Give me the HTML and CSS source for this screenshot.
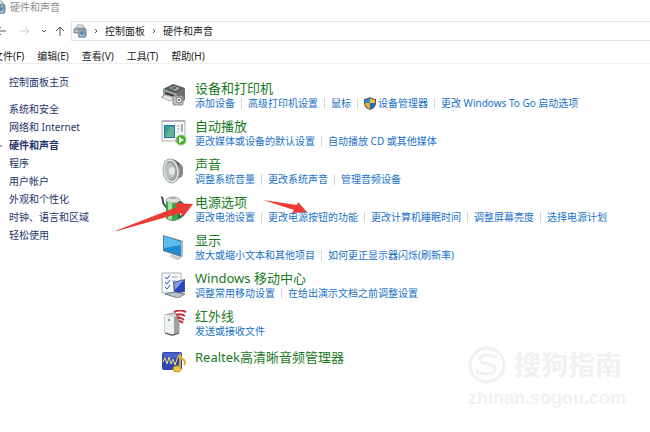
FILE: index.html
```html
<!DOCTYPE html>
<html lang="zh-CN">
<head>
<meta charset="utf-8">
<title>硬件和声音</title>
<link rel="stylesheet" href="styles.css">
</head>
<body>
<svg class="defs" aria-hidden="true">
  <symbol id="device" viewBox="0 0 14 14">
    <path d="M4 4V1h6l1 3" fill="#eef3f6" stroke="#9aa6ae"/>
    <path d="M1 5l2-1h9l1 2v6l-2 1H6V9H1z" fill="#9aa8b2" stroke="#7f8c96"/>
    <path d="M2 7h4" stroke="#dce4e9"/>
    <rect x="6" y="6" width="6" height="7" fill="#b7c9d6" stroke="#6d8292"/>
    <circle cx="9" cy="9" r="2" fill="#4f88b2"/>
  </symbol>
</svg>
<header>
  <div class="titlebar"><svg class="small-icon"><use href="#device"/></svg><span>硬件和声音</span></div>
  <div class="navbar">
    <button class="nav back" aria-label="后退"><svg viewBox="0 0 10 10"><path d="M10 5H1M5 1L1 5l4 4"/></svg></button>
    <button class="nav forward" aria-label="前进" disabled><svg viewBox="0 0 10 10"><path d="M0 5h9M5 1l4 4-4 4"/></svg></button>
    <button class="nav recent" aria-label="最近浏览的位置"><svg viewBox="0 0 10 10"><path d="M3 4l2 2 2-2"/></svg></button>
    <button class="nav up" aria-label="向上"><svg viewBox="0 0 10 10"><path d="M5 10V1M1 5l4-4 4 4"/></svg></button>
    <nav class="address" aria-label="地址">
      <svg class="small-icon"><use href="#device"/></svg>
      <svg class="chevron" viewBox="0 0 6 8"><path d="M2 2l2 2-2 2"/></svg>
      <a href="#">控制面板</a>
      <svg class="chevron" viewBox="0 0 6 8"><path d="M2 2l2 2-2 2"/></svg>
      <a href="#">硬件和声音</a>
    </nav>
  </div>
  <div class="menubar">
    <button>文件(F)</button><button>编辑(E)</button><button>查看(V)</button><button>工具(T)</button><button>帮助(H)</button>
  </div>
</header>
<div class="content">
  <nav class="sidebar" aria-label="类别">
    <a class="home" href="#">控制面板主页</a>
    <a href="#">系统和安全</a>
    <a href="#">网络和 Internet</a>
    <a class="current" href="#" aria-current="page">硬件和声音</a>
    <a href="#">程序</a>
    <a href="#">用户帐户</a>
    <a href="#">外观和个性化</a>
    <a href="#">时钟、语言和区域</a>
    <a href="#">轻松使用</a>
  </nav>
  <main>
    <section class="category">
      <svg class="icon" viewBox="0 0 26 26">
        <path d="M2 7l10-5 12 4-8 6z" fill="#555b5e"/><path d="M8 6l5-2 6 2-4 3z" fill="#a1b4b9"/><path d="M10 6l4-1 2 1-3 1z" fill="#39464b"/>
        <path d="M2 7l14 5v7L2 14z" fill="#999"/><path d="M16 12l8-6v12l-8 4z" fill="#6e6e6e"/>
        <path d="M4 10l9 3v2l-9-3z" fill="#343434"/><path d="M0 15l5-2 9 3-5 3z" fill="#e8e8e8" stroke="#aaa"/>
        <rect x="12" y="14" width="10" height="9" rx="1" fill="#c4c4c4" stroke="#888"/><circle cx="18" cy="18" r="3" fill="#eee" stroke="#777"/><circle cx="18" cy="18" r="1" fill="#546"/>
      </svg>
      <div>
        <h2><a href="#">设备和打印机</a></h2>
        <ul><li><a href="#">添加设备</a></li><li><a href="#">高级打印机设置</a></li><li><a href="#">鼠标</a></li><li><svg class="shield" viewBox="0 0 12 13"><path d="M6 0q3 2 6 2v4q0 5-6 7Q0 11 0 6V2q3 0 6-2z" fill="#46535d"/><path d="M6 1v5H1V3q3 0 5-2z" fill="#2c8bd5"/><path d="M6 1q2 2 5 2v3H6z" fill="#f5c331"/><path d="M1 6h5v6Q1 10 1 6z" fill="#f2ae22"/><path d="M6 6h5q0 4-5 6z" fill="#1970bd"/></svg><a href="#">设备管理器</a></li><li><a href="#">更改 Windows To Go 启动选项</a></li></ul>
      </div>
    </section>
    <section class="category">
      <svg class="icon" viewBox="0 0 26 26">
        <rect x="1" y="1" width="23" height="20" fill="#fafafa" stroke="#a9adb0"/><path d="M1 1h23" stroke="#8f969b"/>
        <rect x="3" y="5" width="11" height="13" fill="#2576a8"/><path d="M4 6h9v11H4z" fill="#3f9c96"/><path d="M4 17l5-10h4v10z" fill="#62b58b"/>
        <path d="M16 6h3M16 9h3M16 12h2" stroke="#9fb0bd"/><path d="M21 4v8" stroke="#4b6478"/>
        <circle cx="20" cy="20" r="5" fill="#45ad31" stroke="#8ccf7e"/><path d="M18 17l5 3-5 3z" fill="#fff"/>
      </svg>
      <div>
        <h2><a href="#">自动播放</a></h2>
        <ul><li><a href="#">更改媒体或设备的默认设置</a></li><li><a href="#">自动播放 CD 或其他媒体</a></li></ul>
      </div>
    </section>
    <section class="category">
      <svg class="icon" viewBox="0 0 26 26">
        <path d="M10 1q4 0 8 4 4 2 4 8t-4 7q-3 4-6 4z" fill="#4f5353"/>
        <path d="M18 5q4 2 4 8t-4 7z" fill="#85898a"/>
        <ellipse cx="10" cy="13" rx="8" ry="12" transform="rotate(-8 10 13)" fill="#e3e5e5" stroke="#a5a9a9"/>
        <ellipse cx="10" cy="13" rx="6" ry="10" transform="rotate(-8 10 13)" fill="#999e9f"/>
        <ellipse cx="9" cy="13" rx="5" ry="8" transform="rotate(-8 9 13)" fill="#bcc2c2"/>
        <ellipse cx="11" cy="13" rx="3" ry="4" fill="#e5e8e8"/>
      </svg>
      <div>
        <h2><a href="#">声音</a></h2>
        <ul><li><a href="#">调整系统音量</a></li><li><a href="#">更改系统声音</a></li><li><a href="#">管理音频设备</a></li></ul>
      </div>
    </section>
    <section class="category power">
      <svg class="icon" viewBox="0 0 26 26">
        <path d="M0 1q2 0 2 5 1 4 6 7" fill="none" stroke="#454b50" stroke-width="2"/>
        <path d="M18 5q6 3 5 10-1 5-5 7" fill="none" stroke="#4c5156" stroke-width="2"/>
        <path d="M5 4v18q7 6 14 0V4z" fill="#35a64a"/><path d="M7 4v19l4 1V4z" fill="#a2e3a7"/><path d="M17 4h2v18l-2 1z" fill="#177831"/>
        <ellipse cx="12" cy="4" rx="7" ry="3" fill="#dbe2da" stroke="#a3afa3"/><ellipse cx="12" cy="2" rx="3" ry="1" fill="#9ea69f"/>
        <path d="M5 22q7 4 14 0v1q-7 4-14 0z" fill="#7e9a7c"/>
      </svg>
      <div>
        <h2><a href="#">电源选项</a></h2>
        <ul><li><a href="#">更改电池设置</a></li><li><a href="#">更改电源按钮的功能</a></li><li><a href="#">更改计算机睡眠时间</a></li><li><a href="#">调整屏幕亮度</a></li><li><a href="#">选择电源计划</a></li></ul>
      </div>
      <svg class="arrows" viewBox="0 0 200 40" aria-hidden="true">
        <path d="M2 37L64 13 62 9 80 10 70 23 68 19 4 37z"/>
        <path d="M150 6L184 11 185 8 194 18 179 19 181 16z"/>
      </svg>
    </section>
    <section class="category">
      <svg class="icon" viewBox="0 0 26 26">
        <path d="M2 1l20 6v15l-2 1L2 17z" fill="#667b8b"/><path d="M3 2l17 6v14L3 16z" fill="#218bd2"/><path d="M3 2l17 6v3L3 14z" fill="#5cbcec"/><path d="M20 8l2-1v15l-2 1z" fill="#a6b9c7"/>
        <path d="M9 19l5 2v1l6 1v2l-4 1-8-4 3-1z" fill="#c4cbd0"/>
      </svg>
      <div>
        <h2><a href="#">显示</a></h2>
        <ul><li><a href="#">放大或缩小文本和其他项目</a></li><li><a href="#">如何更正显示器闪烁(刷新率)</a></li></ul>
      </div>
    </section>
    <section class="category">
      <svg class="icon" viewBox="0 0 26 26">
        <path d="M1 1h19v20H1z" fill="#f7f9fb" stroke="#a5adb3"/>
        <path d="M4 5l2 2 3-4M4 10l2 2 3-4M4 15l2 2 3-4" fill="none" stroke="#2860b0"/><path d="M11 5h6M11 9h4" stroke="#8da5c5"/>
        <path d="M12 10l12-3v13l-11 2z" fill="#4b5870"/><path d="M13 11l10-3v11l-9 2z" fill="#2746bd"/><path d="M13 11l10-3-9 10z" fill="#7f9ce6"/>
        <path d="M4 22l9-2 11 2-7 4z" fill="#bdc4cb" stroke="#727b85"/>
      </svg>
      <div>
        <h2><a href="#">Windows 移动中心</a></h2>
        <ul><li><a href="#">调整常用移动设置</a></li><li><a href="#">在给出演示文档之前调整设置</a></li></ul>
      </div>
    </section>
    <section class="category">
      <svg class="icon" viewBox="0 0 26 26">
        <path d="M4 5l8-2 6 2v18l-7 3-7-3z" fill="#d5d7d7" stroke="#9a9d9d"/><path d="M4 5l9 2v18l-9-2z" fill="#f0f1f1"/><path d="M13 7l5-2v18l-5 2z" fill="#9ea2a2"/>
        <circle cx="8" cy="10" r="1" fill="#4b9a58"/><path d="M4 23l8 2 6-2" fill="none" stroke="#4f5252"/>
        <path d="M13 2q6-3 12 0M15 5q5-2 9 1M16 8q4-1 7 2M18 11q2 0 4 2" fill="none" stroke="#c53138" stroke-width="2"/>
      </svg>
      <div>
        <h2><a href="#">红外线</a></h2>
        <ul><li><a href="#">发送或接收文件</a></li></ul>
      </div>
    </section>
    <section class="category single">
      <svg class="icon" viewBox="0 0 26 26">
        <rect x="1" y="4" width="20" height="18" rx="2" fill="#2f47b3"/><path d="M2 5h18v5H2z" fill="#4762cc"/>
        <path d="M2 14l2-4 2 6 2-7 2 7 2-5 2 6 2-6 2-4 2 4" fill="none" stroke="#ece274"/>
        <path d="M19 20V6q0 4 4 6 2 2 0 5" fill="none" stroke="#e0ac27" stroke-width="2"/><ellipse cx="16" cy="21" rx="4" ry="3" fill="#f0c83d" stroke="#c9991f"/>
      </svg>
      <div>
        <h2><a href="#">Realtek高清晰音频管理器</a></h2>
      </div>
    </section>
  </main>
</div>
<aside class="watermark">
  <div class="brand"><svg viewBox="0 0 38 38"><circle cx="19" cy="19" r="17"/><path d="M29 12q-4-3-10-3-7 0-7 4t7 5q8 1 8 5 0 5-8 5-7 0-11-3"/></svg><span>搜狗指南</span></div>
  <div class="site">zhinan.sogou.com</div>
</aside>
</body>
</html>
```
FILE: styles.css
```css
* { box-sizing: border-box; }
body {
  margin: 0;
  position: relative;
  min-height: 100vh;
  overflow: hidden;
  background: #fff;
  color: #222;
  font: 10px/14px "Noto Sans", "Noto Sans CJK SC", sans-serif;
}
a { color: inherit; text-decoration: none; white-space: nowrap; }
a:hover { text-decoration: underline; }
button { margin: 0; padding: 0; border: 0; background: none; color: inherit; font: inherit; white-space: nowrap; }
h2, ul { margin: 0; padding: 0; font-weight: normal; }
.defs { display: none; }
.small-icon { width: 14px; height: 14px; flex: none; }

.titlebar { display: flex; align-items: center; gap: 4px; height: 14px; margin-left: -8px; color: #8d8d8d; }
.navbar { display: flex; align-items: center; height: 34px; }
.nav { height: 10px; flex: none; }
.nav svg { display: block; width: 10px; height: 10px; fill: none; stroke: #555; }
.back { margin-left: -4px; }
.forward { margin-left: 14px; }
.forward svg { stroke: #ccc; }
.recent { margin-left: 9px; }
.up { margin-left: 6px; }
.address { display: flex; align-items: center; flex: 1; height: 20px; margin-left: 6px; padding-left: 1px; border: 1px solid #e2e2e2; border-right: 0; }
.chevron { width: 6px; height: 8px; margin: 0 6px; fill: none; stroke: #555; }
.menubar { display: flex; gap: 13px; height: 16px; margin-left: -7px; border-bottom: 1px solid #eee; }

.content { display: flex; padding-top: 9px; }
.sidebar { display: flex; flex-direction: column; flex: none; width: 161px; padding-left: 9px; color: #25356c; line-height: 18px; }
.sidebar .home { margin-bottom: 9px; }
.sidebar .current { margin-left: -9px; font-weight: bold; }
.sidebar .current::before { content: ""; display: inline-block; width: 2px; height: 2px; margin-right: 7px; border-radius: 1px; background: #7786ae; vertical-align: middle; }

main { display: flex; flex-direction: column; flex: 1; gap: 8px; padding-top: 7px; }
.category { display: flex; align-items: center; gap: 8px; height: 30px; }
.icon { width: 26px; height: 26px; flex: none; }
h2 { color: #197a1c; font-size: 13px; line-height: 16px; }
ul { display: flex; list-style: none; color: #2171c7; }
li { display: flex; align-items: center; }
li + li::before { content: ""; width: 1px; height: 11px; margin: 0 6px; background: #d6d6d6; }
.shield { width: 12px; height: 13px; margin-right: 2px; }
.power { position: relative; }
.arrows { position: absolute; left: -48px; top: 0; width: 200px; height: 40px; fill: #ee3a35; pointer-events: none; }
.single h2 { margin-bottom: 8px; }

.watermark { position: absolute; right: 24px; bottom: 20px; color: #f1f1f1; pointer-events: none; }
.brand { display: flex; align-items: center; gap: 8px; font-size: 27px; line-height: 38px; font-weight: bold; }
.brand svg { width: 38px; height: 38px; fill: none; stroke: #f1f1f1; stroke-width: 3; }
.site { font: bold 18px/28px "Liberation Sans", sans-serif; text-align: right; }
```
